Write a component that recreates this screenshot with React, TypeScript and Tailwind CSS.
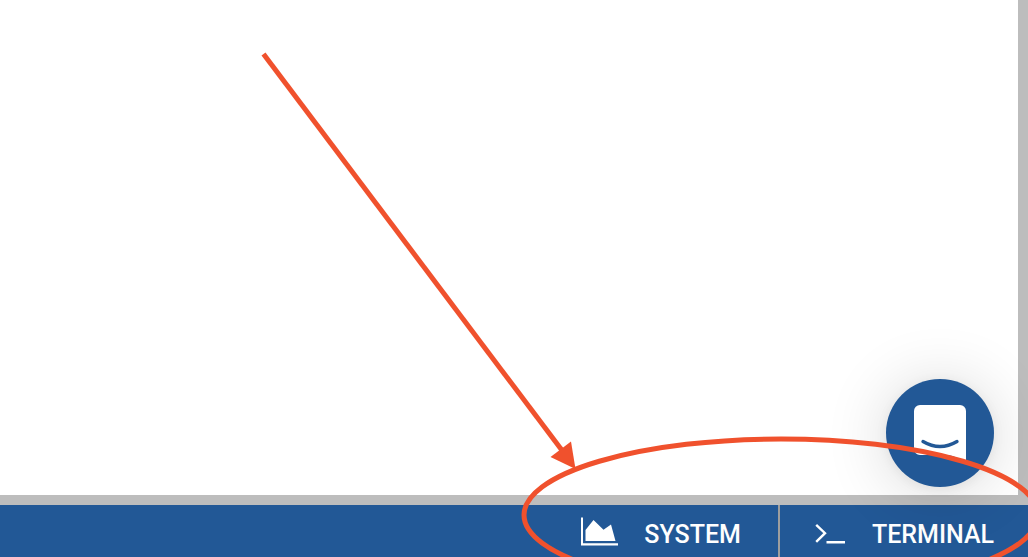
import React from "react";

function AreaChartIcon() {
  return (
    <svg viewBox="0 0 37 29" className="mb-[7px] h-[29px] w-[37px]" fill="#fff" aria-hidden="true">
      <path d="M0 0.5h2v25.8h35v2.2H0z" />
      <path d="M4.5 24V13L12.5 3l10 9.7 7.5-5.2L34.5 24z" />
    </svg>
  );
}

function PromptIcon() {
  return (
    <svg viewBox="0 0 31 22" className="mb-[2px] h-[22px] w-[31px]" fill="none" stroke="#fff" strokeWidth="2.4" aria-hidden="true">
      <path d="M1.2 1.8 10 10.2 1.2 18.8M11.5 19.2H30" />
    </svg>
  );
}

function ChatIcon() {
  return (
    <svg viewBox="0 0 52 58" className="h-[58px] w-[52px]" aria-hidden="true">
      <path d="M6 0H46a6 6 0 0 1 6 6V56C46 54 40 51 34 50H6a6 6 0 0 1-6-6V6a6 6 0 0 1 6-6z" fill="#fff" />
      <path d="M9 36.5Q26 46.5 43 36.5" fill="none" stroke="#225896" strokeWidth="3.4" strokeLinecap="round" />
    </svg>
  );
}

function Annotation() {
  return (
    <svg
      viewBox="0 0 1028 557"
      className="pointer-events-none absolute right-0 bottom-0 h-[557px] w-[1028px]"
      aria-hidden="true"
    >
      <g fill="none" stroke="#f0512d" strokeWidth="5">
        <path d="M263.5 54 564 453" />
        <ellipse cx="781" cy="515" rx="257" ry="76" />
      </g>
      <path d="M575.5 469 550.5 457 571 441.5z" fill="#f0512d" />
    </svg>
  );
}

export default function App() {
  return (
    <div className="relative flex min-h-screen flex-col overflow-hidden bg-[#bdbdbd] font-['Roboto',sans-serif]">
      <main className="mr-[10px] mb-[10px] flex-1 bg-white" />
      <footer className="flex h-[52px] justify-end bg-[#225896] text-[25px] leading-[30px] font-medium text-white">
        <button type="button" className="flex items-center gap-[26px] pt-2 pr-[37px] pl-8">
          <AreaChartIcon />
          <span>SYSTEM</span>
        </button>
        <button
          type="button"
          className="flex items-center gap-[26px] border-l-2 border-[#9e9e9e] pt-2 pr-[34px] pl-[35px]"
        >
          <PromptIcon />
          <span>TERMINAL</span>
        </button>
      </footer>
      <button
        type="button"
        aria-label="Open chat"
        className="absolute right-[34px] bottom-[70px] flex size-[108px] justify-center rounded-full bg-[#225896] pt-[26px] shadow-[0_2px_12px_rgba(0,0,0,0.06),0_4px_64px_rgba(0,0,0,0.16)]"
      >
        <ChatIcon />
      </button>
      <Annotation />
    </div>
  );
}
